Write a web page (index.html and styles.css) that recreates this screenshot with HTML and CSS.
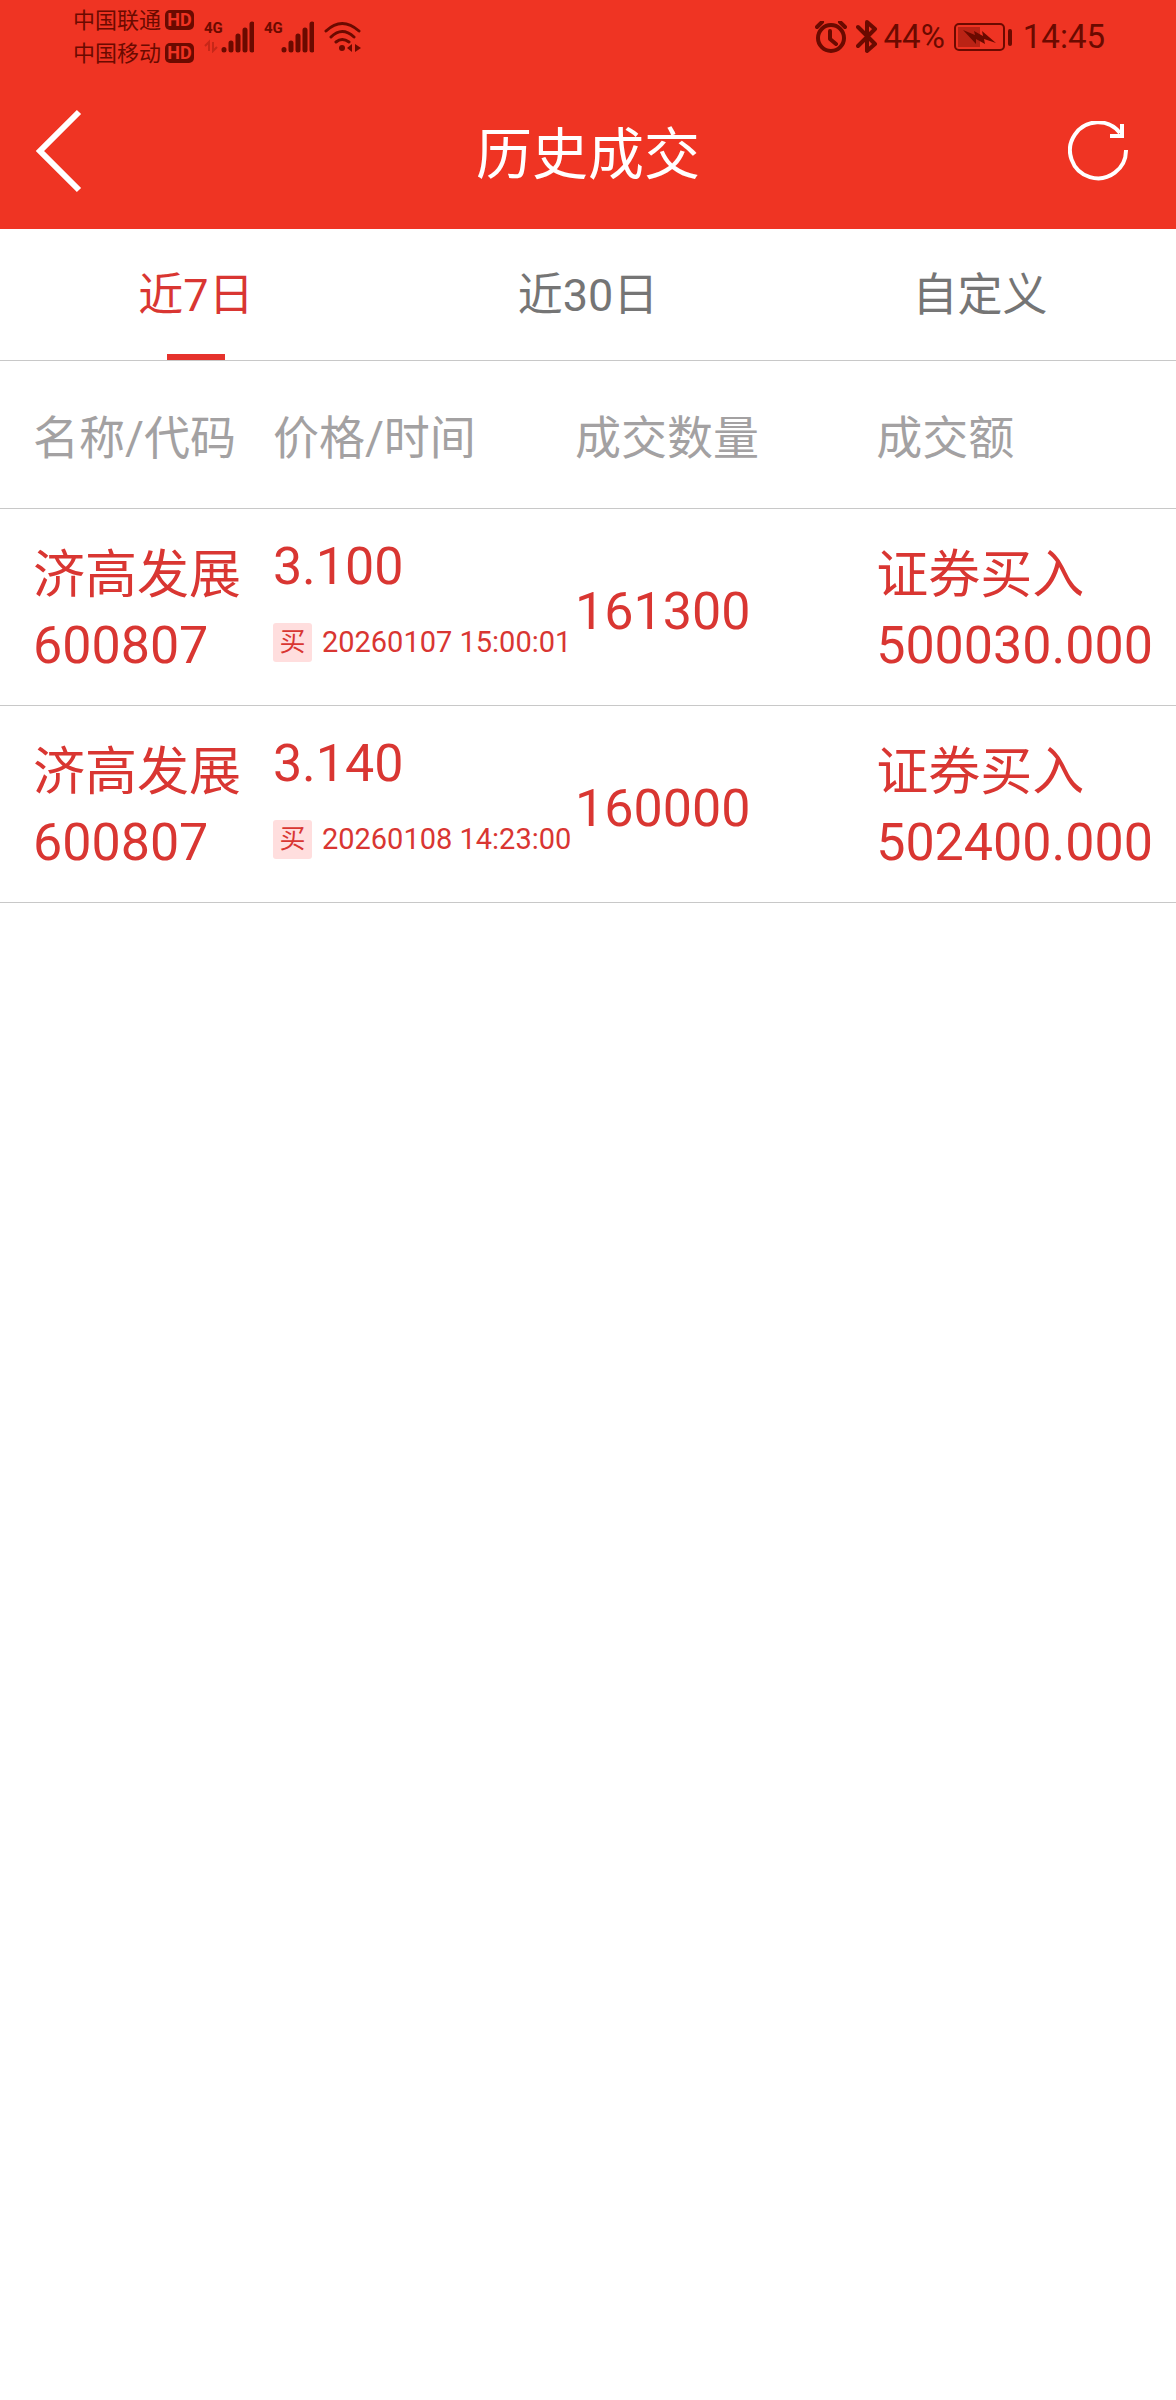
FILE: index.html
```html
<!DOCTYPE html>
<html lang="zh-CN">

<head>
    <meta charset="UTF-8">
    <meta name="viewport" content="width=device-width, initial-scale=1.0">
    <title>历史成交</title>
    <link rel="stylesheet" href="styles.css">
</head>

<body>
    <header class="header">
        <div class="status-bar">
            <div class="status-left">
                <div class="carriers">
                    <div class="carrier">中国联通 <span class="hd">HD</span></div>
                    <div class="carrier">中国移动 <span class="hd">HD</span></div>
                </div>
                <div class="signal">
                    <span class="network">4G</span>
                    <svg width="50" height="32" viewBox="0 0 50 32">
                        <g class="faded">
                            <path d="M1 25l4-4v9M9 21v9l4-4" />
                        </g>
                        <path class="bars" d="M20 28.5v.5M27 22v7M34 15v14M41 9v20M48 3v26" />
                    </svg>
                </div>
                <div class="signal">
                    <span class="network">4G</span>
                    <svg width="50" height="32" viewBox="0 0 50 32">
                        <path class="bars" d="M20 28.5v.5M27 22v7M34 15v14M41 9v20M48 3v26" />
                    </svg>
                </div>
                <svg class="wifi" width="38" height="32" viewBox="0 0 38 32">
                    <path class="line" d="M2 10Q18-5 35 10M7 16Q18 5 30 16M12 21Q18 16 25 21" />
                    <circle cx="18" cy="27" r="3" />
                    <path d="M28 23v8l-5-4zM31 23v8l6-4z" />
                </svg>
            </div>
            <div class="status-right">
                <svg width="32" height="32" viewBox="0 0 32 32">
                    <circle class="line" cx="16" cy="17" r="13" />
                    <path class="line" d="M2 6l5-5M30 6l-5-5M15 10v8l6 5" />
                </svg>
                <svg class="bluetooth" width="22" height="34" viewBox="0 0 22 34">
                    <path class="line" d="M2 7l17 17-8 7V2l8 7L2 26" />
                </svg>
                <span class="battery-text">44%</span>
                <svg class="battery" width="60" height="30" viewBox="0 0 60 30">
                    <rect class="battery-case" x="2" y="2" width="49" height="26" rx="4" />
                    <rect class="battery-level" x="5" y="5" width="22" height="20" />
                    <path class="bolt" d="M10 8l12 5-1-4 9 5-1-5 14 12-12-4 1 5-9-5v5z" />
                    <rect x="55" y="7" width="4" height="17" rx="2" />
                </svg>
                <time>14:45</time>
            </div>
        </div>
        <div class="title-bar">
            <button type="button" class="icon-button" aria-label="返回">
                <svg width="60" height="90" viewBox="0 0 60 90">
                    <path d="M45 6L6 45l39 39" stroke-width="6" />
                </svg>
            </button>
            <h1>历史成交</h1>
            <button type="button" class="icon-button" aria-label="刷新">
                <svg width="60" height="60" viewBox="0 0 60 60">
                    <path d="M58 29A28 28 0 1 1 52 12M54 3v12H42" stroke-width="4" stroke-linecap="butt" />
                </svg>
            </button>
        </div>
    </header>

    <nav class="tabs">
        <button type="button" class="tab active">近7日</button>
        <button type="button" class="tab">近30日</button>
        <button type="button" class="tab">自定义</button>
    </nav>

    <table class="trades">
        <thead>
            <tr>
                <th class="col-name">名称/代码</th>
                <th class="col-price">价格/时间</th>
                <th class="col-count">成交数量</th>
                <th class="col-amount">成交额</th>
            </tr>
        </thead>
        <tbody>
            <tr>
                <td>
                    <div class="line-text">济高发展</div>
                    <div class="line-text">600807</div>
                </td>
                <td>
                    <div class="price">3.100</div>
                    <div class="time"><span class="tag">买</span>20260107 15:00:01</div>
                </td>
                <td>161300</td>
                <td>
                    <div class="line-text">证券买入</div>
                    <div class="line-text">500030.000</div>
                </td>
            </tr>
            <tr>
                <td>
                    <div class="line-text">济高发展</div>
                    <div class="line-text">600807</div>
                </td>
                <td>
                    <div class="price">3.140</div>
                    <div class="time"><span class="tag">买</span>20260108 14:23:00</div>
                </td>
                <td>160000</td>
                <td>
                    <div class="line-text">证券买入</div>
                    <div class="line-text">502400.000</div>
                </td>
            </tr>
        </tbody>
    </table>
</body>

</html>
```

FILE: styles.css
```css
body {
    font-family: Roboto, "Noto Sans CJK SC", sans-serif;
    background-color: #fff;
    margin: 0;
    padding: 0;
}

button {
    font-family: inherit;
    background: none;
    border: none;
    padding: 0;
    cursor: pointer;
}

svg {
    display: block;
}

.header {
    background-color: #ef3423;
}

/* Status bar */
.status-bar {
    display: flex;
    justify-content: space-between;
    height: 73px;
    padding: 0 71px 0 73px;
    color: #6b0a00;
}

.status-bar svg {
    fill: #6b0a00;
}

.status-bar .line {
    fill: none;
    stroke: #6b0a00;
    stroke-width: 3;
    stroke-linecap: round;
    stroke-linejoin: round;
}

.status-left,
.status-right {
    display: flex;
    align-items: center;
}

.status-left {
    gap: 10px;
}

.carriers {
    display: flex;
    flex-direction: column;
}

.carrier {
    display: flex;
    align-items: center;
    gap: 4px;
    font-size: 22px;
    line-height: 33px;
}

.hd {
    width: 29px;
    border-radius: 5px;
    background-color: #6b0a00;
    color: #ef3423;
    font-size: 18px;
    font-weight: bold;
    line-height: 20px;
    text-align: center;
}

.signal {
    position: relative;
}

.network {
    position: absolute;
    top: 0;
    left: 0;
    font-size: 15px;
    font-weight: bold;
    line-height: 15px;
}

.bars {
    fill: none;
    stroke: #6b0a00;
    stroke-width: 5;
    stroke-linecap: round;
}

.faded {
    fill: none;
    stroke: #6b0a00;
    stroke-width: 2;
    opacity: 0.3;
}

.status-right {
    font-size: 33px;
}

.status-right .line {
    stroke-width: 4;
}

.bluetooth {
    margin: 0 6px 0 9px;
}

.battery {
    margin: 0 10px 0 8px;
}

.status-bar .battery-case {
    fill: none;
    stroke: #6b0a00;
    stroke-width: 2;
}

.battery-level {
    opacity: 0.4;
}

/* Title bar */
.title-bar {
    display: flex;
    align-items: center;
    justify-content: space-between;
    height: 156px;
    padding: 0 34px;
    color: #fff;
}

.title-bar h1 {
    margin: 0;
    padding-bottom: 4px;
    font-size: 56px;
    font-weight: normal;
}

.icon-button {
    width: 74px;
}

.icon-button svg {
    fill: none;
    stroke: #fff;
}

.icon-button path {
    stroke-linejoin: miter;
}

/* Tabs */
.tabs {
    display: flex;
    border-bottom: 1px solid #c8c8c8;
}

.tab {
    position: relative;
    flex: 1;
    height: 131px;
    padding-bottom: 6px;
    color: #757575;
    font-size: 45px;
}

.tab.active {
    color: #d93632;
}

.tab.active::after {
    content: "";
    position: absolute;
    left: 50%;
    bottom: 0;
    width: 58px;
    height: 6px;
    margin-left: -29px;
    background-color: #e6322c;
}

/* Trade list */
.trades {
    width: 100%;
    table-layout: fixed;
    border-collapse: collapse;
}

.trades th,
.trades td {
    border-bottom: 1px solid #c8c8c8;
    text-align: left;
    white-space: nowrap;
}

.trades th {
    height: 145px;
    padding: 0 0 2px;
    color: #a3a1a2;
    font-size: 46px;
    font-weight: normal;
}

.trades td {
    padding: 27px 0 19px;
    color: #d93632;
    font-size: 52px;
}

.trades th:first-child,
.trades td:first-child {
    padding-left: 33px;
}

.col-name {
    width: 20.4%;
}

.col-price {
    width: 25.7%;
}

.col-count {
    width: 25.6%;
}

.line-text {
    line-height: 70px;
}

.price {
    line-height: 62px;
}

.time {
    display: flex;
    align-items: center;
    gap: 10px;
    height: 88px;
    font-size: 29px;
}

.tag {
    width: 39px;
    border-radius: 3px;
    background-color: #ffdede;
    font-size: 26px;
    line-height: 39px;
    text-align: center;
}
```
